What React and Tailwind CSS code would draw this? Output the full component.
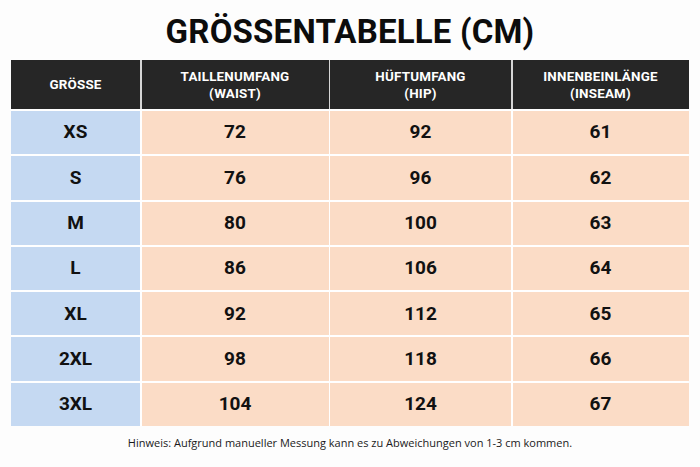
const HEADERS = [
  ['GRÖSSE'],
  ['TAILLENUMFANG', '(WAIST)'],
  ['HÜFTUMFANG', '(HIP)'],
  ['INNENBEINLÄNGE', '(INSEAM)'],
]

const ROWS = [
  ['XS', 72, 92, 61],
  ['S', 76, 96, 62],
  ['M', 80, 100, 63],
  ['L', 86, 106, 64],
  ['XL', 92, 112, 65],
  ['2XL', 98, 118, 66],
  ['3XL', 104, 124, 67],
]

const cols = 'grid grid-cols-[129px_187px_181px_176px] gap-x-[1.5px]'

export default function App() {
  return (
    <div className="w-[700px] h-[467px] bg-[#fdfdfd] font-['Roboto',sans-serif] overflow-hidden">
      <h1 className="pt-[12px] text-center text-[33px] leading-[40px] font-bold tracking-[0.2px] text-[#0c0c0c]">
        GRÖSSENTABELLE (CM)
      </h1>
      <div className="ml-[11px] mt-[8px] w-[677px]">
        <div className={`${cols} bg-[#d6d6d6] h-[49px]`}>
          {HEADERS.map((h, i) => (
            <div
              key={i}
              className="bg-[#262626] flex flex-col items-center justify-center text-white font-bold text-[13.4px] leading-[17px] tracking-[0.2px]"
            >
              {h.map((t) => (
                <span key={t}>{t}</span>
              ))}
            </div>
          ))}
        </div>
        <div className="bg-white pt-[2px] flex flex-col gap-y-[2px]">
          {ROWS.map((r) => (
            <div key={r[0]} className={`${cols} bg-white h-[43.3px]`}>
              {r.map((v, i) => (
                <div
                  key={i}
                  className={`${i === 0 ? 'bg-[#c5d9f2]' : 'bg-[#fbdcc6]'} flex items-center justify-center text-[19px] font-bold text-[#111]`}
                >
                  {v}
                </div>
              ))}
            </div>
          ))}
        </div>
      </div>
      <p className="mt-[9px] text-center text-[11px] text-[#1a1a1a] font-['Open_Sans',sans-serif]">
        Hinweis: Aufgrund manueller Messung kann es zu Abweichungen von 1-3 cm kommen.
      </p>
    </div>
  )
}
